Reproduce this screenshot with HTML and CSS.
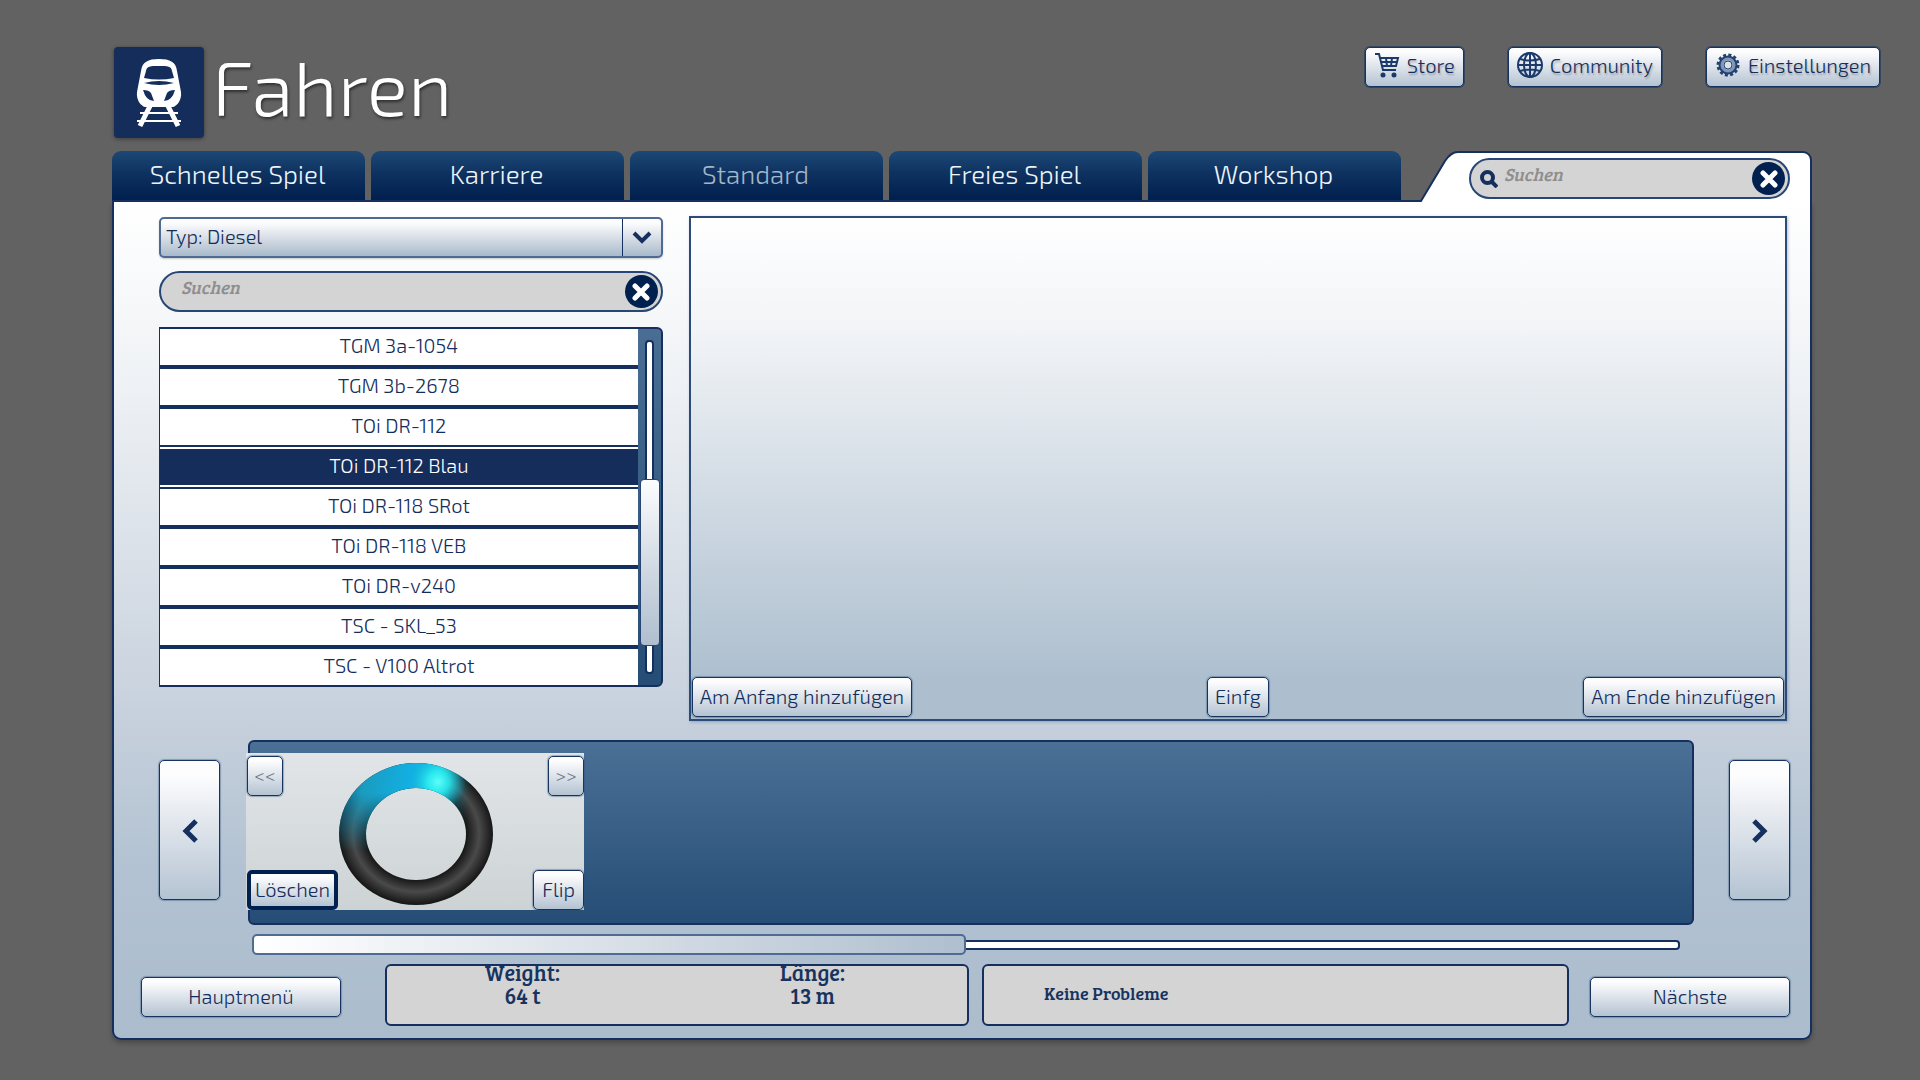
FILE: index.html
```html
<!DOCTYPE html>
<html lang="de">
<head>
<meta charset="utf-8">
<meta name="viewport" content="width=device-width, initial-scale=1">
<title>Fahren</title>
<link rel="stylesheet" href="styles.css">
</head>
<body>
<header class="header">
  <svg class="logo" viewBox="0 0 90 91" aria-hidden="true">
    <rect width="90" height="91" rx="4" fill="#152d5b"/>
    <path fill="#fff" d="M45 12C56 12 62 15 63 24L67 45C68 53 63 59 59 60H31C27 59 22 53 23 45L27 24C28 15 34 12 45 12Z"/>
    <path fill="#152d5b" d="M45 19C54 19 57 19 58 24L60 31Q45 34 30 31L32 24C33 19 36 19 45 19ZM30 36Q45 32 60 36Q45 40 30 36ZM29 43Q35 43 37 46L40 54Q32 54 29 43ZM61 43Q55 43 53 46L50 54Q58 54 61 43Z"/>
    <path d="M26 66H64M23 74H67" stroke="#fff" stroke-width="2"/>
    <path d="M36 59L26 79M54 59L64 79" stroke="#fff" stroke-width="5"/>
  </svg>
  <h1 class="title">Fahren</h1>
  <nav class="links">
    <button class="btn link-btn">
      <svg width="26" height="26" viewBox="0 0 26 26" fill="none" stroke="#1b3a6b" stroke-width="2" aria-hidden="true"><path d="M1 2H5L9 18H22M6 6H24L22 14H8M12 6L13 14M18 6L17 14M7 10H23"/><circle cx="9" cy="23" r="1.5" fill="#1b3a6b"/><circle cx="20" cy="23" r="1.5" fill="#1b3a6b"/></svg>
      Store</button>
    <button class="btn link-btn">
      <svg width="26" height="26" viewBox="0 0 26 26" fill="none" stroke="#1b3a6b" stroke-width="2" aria-hidden="true"><circle cx="13" cy="13" r="12"/><ellipse cx="13" cy="13" rx="6" ry="12"/><path d="M13 1V25M1 13H25M3 7Q13 10 23 7M3 19Q13 16 23 19"/></svg>
      Community</button>
    <button class="btn link-btn">
      <svg width="26" height="26" viewBox="0 0 26 26" fill="none" stroke="#24426f" aria-hidden="true"><circle cx="13" cy="13" r="10" stroke-width="3" stroke-dasharray="3 2.236"/><circle cx="13" cy="13" r="8" stroke="#24426f" stroke-width="3"/><circle cx="13" cy="13" r="6" stroke="#7f96b6" stroke-width="3"/><circle cx="13" cy="13" r="4" fill="#dbe2ea" stroke-width="1"/></svg>
      Einstellungen</button>
  </nav>
</header>
<main class="window">
  <div class="tabs-row">
    <nav class="tabs">
      <button class="tab">Schnelles Spiel</button>
      <button class="tab">Karriere</button>
      <button class="tab tab-current">Standard</button>
      <button class="tab">Freies Spiel</button>
      <button class="tab">Workshop</button>
    </nav>
    <svg class="slant" width="38" height="51" viewBox="0 0 38 51" aria-hidden="true"><path d="M0 51L25 10Q31 1 38 1V51Z" fill="#fff"/><path d="M0 50H1L25 10Q31 1 38 1" fill="none" stroke="#152f5e" stroke-width="2"/></svg>
    <div class="cap">
      <div class="search">
        <svg class="lens" width="18" height="18" viewBox="0 0 18 18" fill="none" stroke="#152f5e" aria-hidden="true"><circle cx="7.500" cy="7.500" r="5.500" stroke-width="4"/><path d="M12 12L17 17" stroke-width="4"/></svg>
        <input class="search-input" type="text" placeholder="Suchen" aria-label="Suchen">
        <button class="clear" aria-label="Leeren"><svg width="18" height="18" viewBox="0 0 18 18" aria-hidden="true"><path d="M3 3L15 15M15 3L3 15" stroke="#fff" stroke-width="5" stroke-linecap="round"/></svg></button>
      </div>
    </div>
  </div>
  <div class="panel">
    <section class="upper">
      <div class="browser">
        <div class="picker">
          <select class="picker-select" aria-label="Typ"><option>Typ: Diesel</option></select>
          <span class="picker-arrow"><svg width="20" height="14" viewBox="0 0 20 14" aria-hidden="true"><path d="M2 2L10 10L18 2" fill="none" stroke="#152f5e" stroke-width="4"/></svg></span>
        </div>
        <div class="search search-wide">
          <input class="search-input" type="text" placeholder="Suchen" aria-label="Fahrzeug suchen">
          <button class="clear" aria-label="Leeren"><svg width="18" height="18" viewBox="0 0 18 18" aria-hidden="true"><path d="M3 3L15 15M15 3L3 15" stroke="#fff" stroke-width="5" stroke-linecap="round"/></svg></button>
        </div>
        <div class="list-box">
          <ul class="list">
            <li><button class="row">TGM 3a-1054</button></li>
            <li><button class="row">TGM 3b-2678</button></li>
            <li><button class="row">TOi DR-112</button></li>
            <li><button class="row row-selected">TOi DR-112 Blau</button></li>
            <li><button class="row">TOi DR-118 SRot</button></li>
            <li><button class="row">TOi DR-118 VEB</button></li>
            <li><button class="row">TOi DR-v240</button></li>
            <li><button class="row">TSC - SKL_53</button></li>
            <li><button class="row">TSC - V100 Altrot</button></li>
          </ul>
          <div class="vscroll"><div class="vtrack"></div><div class="vthumb"></div></div>
        </div>
      </div>
      <div class="preview">
        <button class="btn">Am Anfang hinzufügen</button>
        <button class="btn">Einfg</button>
        <button class="btn">Am Ende hinzufügen</button>
      </div>
    </section>
    <section class="consist">
      <button class="btn page-btn" aria-label="Zurück"><svg width="16" height="24" viewBox="0 0 16 24" aria-hidden="true"><path d="M14 2L4 12L14 22" fill="none" stroke="#152f5e" stroke-width="5"/></svg></button>
      <div class="consist-main">
        <div class="strip">
          <article class="card">
            <svg class="ring" width="154" height="142" viewBox="0 0 154 142" aria-hidden="true">
              <defs>
                <radialGradient id="tube" gradientUnits="userSpaceOnUse" cx="77" cy="71" r="77" gradientTransform="translate(0 5) scale(1 .922)">
                  <stop offset=".65" stop-color="#161616"/><stop offset=".82" stop-color="#4a4a4a"/><stop offset="1" stop-color="#161616"/>
                </radialGradient>
                <linearGradient id="sweep" gradientUnits="userSpaceOnUse" x1="0" y1="0" x2="134" y2="20">
                  <stop offset="0" stop-color="#0f5878"/><stop offset=".2" stop-color="#1a9cc0"/><stop offset=".55" stop-color="#12b0e4"/><stop offset=".75" stop-color="#12c4e0"/><stop offset="1" stop-color="#0e6f80" stop-opacity="0"/>
                </linearGradient>
                <linearGradient id="fade" gradientUnits="userSpaceOnUse" x1="0" y1="30" x2="0" y2="88">
                  <stop offset="0" stop-color="#fff"/><stop offset="1" stop-color="#000"/>
                </linearGradient>
                <mask id="upper-half"><rect width="154" height="142" fill="url(#fade)"/></mask>
                <radialGradient id="glow" gradientUnits="userSpaceOnUse" cx="99" cy="19" r="28">
                  <stop offset="0" stop-color="#5dfff8"/><stop offset=".4" stop-color="#2df0f2" stop-opacity=".8"/><stop offset="1" stop-color="#18b4d0" stop-opacity="0"/>
                </radialGradient>
                <path id="torus" fill-rule="evenodd" d="M77 0A77 71 0 1 1 77 142A77 71 0 1 1 77 0ZM77 25A50 46 0 1 0 77 117A50 46 0 1 0 77 25Z"/>
              </defs>
              <use href="#torus" fill="url(#tube)"/>
              <use href="#torus" fill="url(#sweep)" mask="url(#upper-half)"/>
              <use href="#torus" fill="url(#glow)"/>
            </svg>
            <div class="card-row">
              <button class="btn card-btn" disabled>&lt;&lt;</button>
              <button class="btn card-btn" disabled>&gt;&gt;</button>
            </div>
            <div class="card-row">
              <button class="btn card-btn btn-focus">Löschen</button>
              <button class="btn card-btn">Flip</button>
            </div>
          </article>
        </div>
        <div class="hscroll"><div class="hthumb"></div><div class="htrack"></div></div>
      </div>
      <button class="btn page-btn" aria-label="Weiter"><svg width="16" height="24" viewBox="0 0 16 24" aria-hidden="true"><path d="M2 2L12 12L2 22" fill="none" stroke="#152f5e" stroke-width="5"/></svg></button>
    </section>
    <footer class="footer">
      <button class="btn wide-btn">Hauptmenü</button>
      <dl class="info stats">
        <div><dt>Weight:</dt><dd>64 t</dd></div>
        <div><dt>Länge:</dt><dd>13 m</dd></div>
      </dl>
      <p class="info problems">Keine Probleme</p>
      <button class="btn wide-btn">Nächste</button>
    </footer>
  </div>
</main>
</body>
</html>
```
FILE: styles.css
```css
* { box-sizing: border-box; }

:root {
  --navy: #152f5e;
  --ink: #132c5a;
  --sans: "Exo 2", Roboto, "Liberation Sans", sans-serif;
  --serif: "Bree Serif", "Liberation Serif", serif;
}

body {
  margin: 0;
  min-height: 100vh;
  background: #626262;
  font-family: var(--sans);
  font-size: 20px;
  font-weight: 300;
  color: var(--ink);
}

button, input, select { font: inherit; color: inherit; }
button { cursor: pointer; }

.btn {
  height: 40px;
  padding: 0 8px 3px;
  border: 1px solid #17335f;
  border-radius: 5px;
  background: linear-gradient(#fdfdfe 10%, #d9e0e8 55%, #b4c3d2);
  box-shadow: 0 0 1px 1px #2f568066;
  white-space: nowrap;
}

/* header */
.header {
  display: flex;
  align-items: flex-start;
  padding: 47px 40px 13px 114px;
}
.logo {
  width: 90px;
  height: 91px;
  filter: drop-shadow(0 1px 2px #0006);
}
.title {
  margin: 0 0 0 8px;
  font-size: 77px;
  line-height: 76px;
  font-weight: 300;
  color: #fff;
  text-shadow: 1px 2px 3px #0008;
}
.links {
  display: flex;
  gap: 44px;
  margin-left: auto;
}
.link-btn {
  display: flex;
  align-items: center;
  gap: 7px;
  padding: 0 8px 4px;
  box-shadow: 0 0 0 1px #17335f99;
  text-shadow: 1px 2px 2px #0004;
}

/* tabs */
.window { margin: 0 108px 39px 112px; }
.tabs-row { display: flex; height: 51px; }
.tabs {
  flex: 1;
  display: flex;
  gap: 6px;
  padding-right: 19px;
  border-bottom: 2px solid var(--navy);
}
.tab {
  flex: 1 1 0;
  padding: 0 2px 4px 0;
  border: 0;
  border-radius: 9px 9px 0 0;
  background: linear-gradient(#1d4875, #0e3260 45%, #001f4f);
  color: #eef4fa;
  font-size: 26px;
}
.tab-current { color: #a4b6ca; }
.cap {
  width: 354px;
  padding: 5px 20px 0 11px;
  border: solid var(--navy);
  border-width: 2px 2px 0 0;
  border-radius: 0 9px 0 0;
  background: #fff;
}

/* search fields */
.search {
  display: flex;
  align-items: center;
  height: 41px;
  padding: 0 3px 0 9px;
  border: 2px solid #274675;
  border-radius: 21px;
  background: #d4d4d4;
}
.search-input {
  flex: 1;
  min-width: 0;
  height: 28px;
  margin-bottom: 9px;
  padding: 0 0 0 6px;
  border: 0;
  outline: 0;
  background: none;
  font-family: var(--serif);
  font-size: 18px;
  font-style: italic;
}
.search-input::placeholder { color: #8e8e8e; opacity: 1; }
.search-wide { padding-left: 14px; }
.clear {
  display: grid;
  place-items: center;
  width: 33px;
  height: 33px;
  padding: 0;
  border: 0;
  border-radius: 50%;
  background: #00214f;
}

/* main panel */
.panel {
  padding: 14px 20px 12px 27px;
  border: solid var(--navy);
  border-width: 0 2px 2px;
  border-radius: 0 0 9px 9px;
  background: linear-gradient(#fff, #f0f3f6 20%, #c6d0dc 62%, #b2c2d2 80%, #abbccd);
  box-shadow: 0 3px 5px #0004;
}
.upper {
  display: flex;
  gap: 26px;
  padding: 0 3px 0 18px;
}
.browser { flex: 506 1 0; min-width: 0; padding-top: 1px; }

.picker {
  display: flex;
  height: 41px;
  margin-bottom: 13px;
  border: 2px solid #4f6b93;
  border-radius: 5px;
  background: linear-gradient(#fdfdfe 10%, #d3dbe4 55%, #a9bacb);
  box-shadow: 0 1px 2px #0003;
}
.picker-select {
  flex: 1;
  padding: 0 5px 3px;
  border: 0;
  outline: 0;
  appearance: none;
  background: none;
}
.picker-arrow {
  display: grid;
  place-items: center;
  width: 39px;
  border-left: 1px solid var(--navy);
}

.list-box {
  display: flex;
  margin-top: 15px;
  border: 2px solid var(--navy);
  border-left-width: 1px;
  border-radius: 0 6px 6px 0;
  background: linear-gradient(#4a6e93, #254d75);
}
.list {
  flex: 1;
  display: grid;
  gap: 4px;
  margin: 0;
  padding: 0;
  list-style: none;
  background: var(--navy);
}
.row {
  display: block;
  width: 100%;
  height: 36px;
  padding: 0 0 4px;
  border: 0;
  background: #fff;
}
.row-selected {
  background: #152d5a;
  color: #fff;
  box-shadow: 0 -2px #fff, 0 2px #fff;
}
.vscroll {
  position: relative;
  width: 23px;
}
.vtrack {
  height: calc(100% - 22px);
  margin: 11px 7px;
  border: 2px solid var(--navy);
  border-radius: 4px;
  background: #fff;
}
.vthumb {
  position: absolute;
  inset: 42% 1px 11% 2px;
  border: 1px solid #274675;
  border-radius: 4px;
  background: linear-gradient(#fdfdfe, #d3dbe4 50%, #afbfcf);
}

.preview {
  flex: 1097 1 0;
  display: grid;
  grid-template-columns: 1fr auto 1fr;
  align-items: end;
  justify-items: start;
  min-height: 505px;
  padding: 2px 1px 2px 1px;
  border: 2px solid #2c4b78;
  background: linear-gradient(#fff, #f2f4f7 22%, #adbfcf 92%);
  box-shadow: 1px 1px 3px #274a8055;
}
.preview .btn { padding: 0 7px 2px; }
.preview .btn:last-child { justify-self: end; }

/* consist strip */
.consist {
  display: flex;
  align-items: flex-start;
  margin-top: 19px;
  padding-left: 18px;
}
.page-btn {
  width: 61px;
  height: 140px;
  margin-top: 20px;
  padding: 5px 0 0;
}
.consist-main {
  flex: 1;
  margin: 0 35px 0 28px;
}
.strip {
  height: 185px;
  padding-top: 11px;
  border: 2px solid var(--navy);
  border-radius: 6px;
  background: linear-gradient(#4b7096, #254d75);
}
.card {
  position: relative;
  display: flex;
  flex-direction: column;
  justify-content: space-between;
  width: 338px;
  height: 157px;
  margin-left: -4px;
  padding: 3px 0 0 1px;
  background: linear-gradient(#e1e5e7, #cdd3d5);
}
.ring {
  position: absolute;
  top: 10px;
  left: 93px;
}
.card-row { display: flex; justify-content: space-between; }
.card-btn { padding: 0 8px 2px; }
.card-btn:disabled { width: 36px; padding: 0 0 2px; color: #6d7784; }
.btn-focus { padding: 0 4px 2px; border: 4px solid #00214f; box-shadow: none; }

.hscroll {
  display: flex;
  align-items: center;
  margin: 9px 14px 0 4px;
}
.hthumb {
  width: 50%;
  height: 21px;
  border: 2px solid #4f6b93;
  border-radius: 5px;
  background: linear-gradient(90deg, #fff, #d9e0e8 50%, #afbfcf);
}
.htrack {
  flex: 1;
  height: 10px;
  border: 2px solid var(--navy);
  border-left: 0;
  border-radius: 0 4px 4px 0;
  background: #fff;
}

/* footer */
.footer {
  display: grid;
  grid-template-columns: auto 628fr 621fr auto;
  align-items: center;
  margin-top: 9px;
}
.wide-btn { width: 200px; margin-top: 4px; }
.info {
  height: 62px;
  margin: 0;
  border: 2px solid var(--navy);
  border-radius: 6px;
  background: #d4d4d4;
  color: #17335f;
  font-family: var(--serif);
  font-weight: 400;
}
.stats {
  display: grid;
  grid-template-columns: 270fr 308fr;
  align-content: start;
  margin-left: 44px;
  text-align: center;
  font-size: 22px;
  line-height: 23px;
}
.stats div { margin-top: -5px; }
.stats dd { margin: 0; }
.problems {
  display: flex;
  align-items: center;
  margin: 0 21px 0 13px;
  padding: 0 60px 4px;
  font-size: 18px;
}
```
